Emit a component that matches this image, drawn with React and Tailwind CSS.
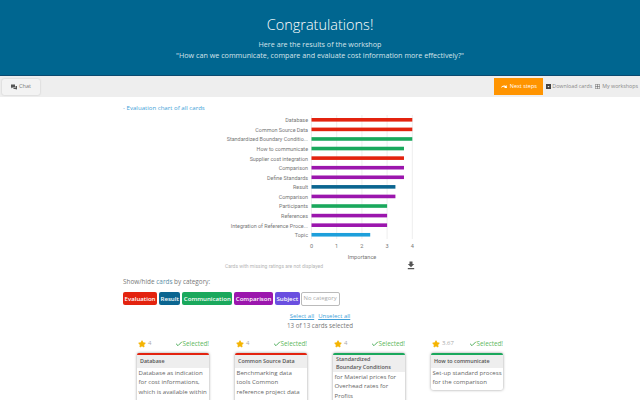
import React from 'react';
import { Check, Star } from 'lucide-react';

const bars = [
  ['Database', 4, '#e3230f'],
  ['Common Source Data', 4, '#e3230f'],
  ['Standardized Boundary Conditio...', 4, '#1aa85c'],
  ['How to communicate', 3.67, '#1aa85c'],
  ['Supplier cost integration', 3.67, '#e3230f'],
  ['Comparison', 3.67, '#9b16ad'],
  ['Define Standards', 3.67, '#9b16ad'],
  ['Result', 3.33, '#0b6590'],
  ['Comparison', 3.33, '#9b16ad'],
  ['Participants', 3, '#1aa85c'],
  ['References', 3, '#9b16ad'],
  ['Integration of Reference Proce...', 3, '#9b16ad'],
  ['Topic', 2.33, '#1d9fdb'],
];

const chips = [
  ['Evaluation', 'bg-[#e3230f]'],
  ['Result', 'bg-[#0b6590]'],
  ['Communication', 'bg-[#1aa85c]'],
  ['Comparison', 'bg-[#9b16ad]'],
  ['Subject', 'bg-[#6a4fe0]'],
];

const cards = [
  { rating: '4', title: 'Database', color: 'border-t-[#e3230f]', pad: 'pb-[12px]', text: 'Database as indication for cost informations, which is available within' },
  { rating: '4', title: 'Common Source Data', color: 'border-t-[#e3230f]', pad: 'pb-[12px]', text: 'Benchmarking data tools Common reference project data' },
  { rating: '4', title: 'Standardized Boundary Conditions', color: 'border-t-[#1aa85c]', pad: 'pb-[12px]', text: 'for Material prices for Overhead rates for Profits' },
  { rating: '3.67', title: 'How to communicate', color: 'border-t-[#1aa85c]', pad: 'pb-[3px]', text: 'Set-up standard process for the comparison' },
];

const Chart = () => (
  <svg width="320" height="161" viewBox="0 0 320 161" className="block" style={{ fontFamily: 'Roboto, sans-serif' }}>
    {[0, 1, 2, 3, 4].map((t) => (
      <g key={t}>
        <line x1={191.5 + t * 25.2} x2={191.5 + t * 25.2} y1="3" y2="127" stroke="#eeeeee" />
        <text x={191.5 + t * 25.2} y="136" fontSize="5.6" fill="#777777" textAnchor="middle">{t}</text>
      </g>
    ))}
    {bars.map(([label, value, color], i) => (
      <g key={i}>
        <text x="188" y={10.2 + i * 9.58} fontSize="5.4" fill="#777777" textAnchor="end">{label}</text>
        <rect x="191.5" y={6 + i * 9.58} width={value * 25.2} height="3.6" fill={color} />
      </g>
    ))}
    <text x="242" y="146.5" fontSize="5.6" fill="#777777" textAnchor="middle">Importance</text>
    <text x="105" y="156" fontSize="5" fill="#b5b5b5">Cards with missing ratings are not displayed</text>
    <path d="M289.5 149.5h3v2.5h1.7l-3.2 3.2-3.2-3.2h1.7zM287.8 156h6.4v1.2h-6.4z" fill="#555555" />
  </svg>
);

const Card = ({ rating, title, color, pad, text }) => (
  <div className="w-[72px] shrink-0">
    <div className="flex items-center justify-between h-[12px] mb-[3px] pl-px">
      <span className="flex items-center gap-[2px] text-[6px] text-[#aaaaaa]">
        <Star size={8} fill="#f5b400" stroke="#f5b400" />
        {rating}
      </span>
      <span className="flex items-center text-[6.3px] text-[#5cb85c]">
        <Check size={8} stroke="#2e9e3f" strokeWidth={2.5} />
        Selected!
      </span>
    </div>
    <div className={`border-t-2 ${color} rounded-[2px] shadow-[0_0_3px_rgba(0,0,0,0.4)] bg-white`}>
      <div className="bg-[#eeeeee] min-h-[13px] flex items-center pl-[3px] pr-[9px] text-[5.4px] leading-[8.5px] font-semibold text-[#555555]">{title}</div>
      <div className={`pl-[1.5px] ${pad} text-[6.1px] leading-[9.6px] text-[#666666]`}>{text}</div>
    </div>
  </div>
);

export default function App() {
  return (
    <div className="h-[400px] w-[640px] overflow-hidden bg-white" style={{ fontFamily: '"Open Sans", sans-serif' }}>
      <header className="h-[76px] bg-[#006690] border-b border-b-[#0a4a70] pt-[15px] text-center text-white">
        <h1 className="text-[14.5px] leading-[20px] font-light">Congratulations!</h1>
        <p className="mt-[4px] text-[7.2px] leading-[11px] text-[#d5e3ea]">Here are the results of the workshop</p>
        <p className="text-[7.2px] leading-[11px] text-[#d5e3ea]">"How can we communicate, compare and evaluate cost information more effectively?"</p>
      </header>

      <div className="h-[21px] bg-[#eeeeee] flex items-center justify-between pl-[2px] pr-[2px]">
        <button className="h-[16px] w-[38px] bg-[#f3f3f3] rounded-[2px] shadow-[0_0_2px_rgba(0,0,0,0.2)] flex items-center justify-center gap-[2px] text-[5.5px] text-[#777777]">
          <svg width="6" height="6" viewBox="0 0 12 12" fill="#555555"><path d="M0 1h8v6H3L1 9V7H0zM9 4h3v6h-1v2L9 10H5V8h4z" /></svg>
          Chat
        </button>
        <div className="flex items-center">
          <button className="h-[17px] w-[49px] bg-[#ff9400] flex items-center justify-center gap-[2px] text-[5.5px] text-white mr-[3px]">
            <svg width="7" height="5" viewBox="0 0 14 10" fill="white"><path d="M0 8C2 3 6 2 9 4l2-2 1 6H6l2-2C6 5 3 5 0 8z" /></svg>
            Next steps
          </button>
          <span className="flex items-center gap-[1px] text-[5.3px] text-[#888888] mr-[3px]">
            <svg width="5" height="5" viewBox="0 0 10 10" fill="#444444"><path d="M0 0h10v10H0zM3 4l2 3 2-3z" fillRule="evenodd" /></svg>
            Download cards
          </span>
          <span className="flex items-center gap-[2px] text-[5.3px] text-[#888888]">
            <svg width="5" height="5" viewBox="0 0 10 10" fill="none" stroke="#555555"><path d="M.5.5h9v9h-9zM.5 5h9M5 .5v9" /></svg>
            My workshops
          </span>
        </div>
      </div>

      <main className="pl-[123px] pr-[120px]">
        <p className="mt-[6px] text-[6.1px] leading-[9px] text-[#3f9fd8]">- Evaluation chart of all cards</p>
        <div className="-ml-[3px]">
          <Chart />
        </div>
        <p className="mt-[4px] text-[6.4px] leading-[9px] text-[#777777]">Show/hide <span className="text-[#5a8fa8]">cards</span> by category:</p>
        <div className="flex gap-[2px] mt-[6px]">
          {chips.map(([name, bg]) => (
            <span key={name} className={`${bg} h-[13px] px-[1.5px] rounded-[2px] flex items-center text-[6.1px] font-semibold text-white`}>{name}</span>
          ))}
          <span className="h-[14px] -mt-[0.5px] -ml-[1px] px-[2px] rounded-[2px] border border-[#bbbbbb] flex items-center text-[5.9px] text-[#aaaaaa]">No category</span>
        </div>
        <div className="w-[394px] text-center mt-[6px]">
          <div className="flex justify-center gap-[4px] text-[6px] leading-[9px] text-[#3f9fd8] underline">
            <span>Select all</span>
            <span>Unselect all</span>
          </div>
          <p className="text-[6.2px] leading-[10px] text-[#777777]">13 of 13 cards selected</p>
        </div>
        <div className="flex gap-[26px] mt-[7px] ml-[14px] items-start">
          {cards.map((c) => (
            <Card key={c.title} {...c} />
          ))}
        </div>
      </main>
    </div>
  );
}
